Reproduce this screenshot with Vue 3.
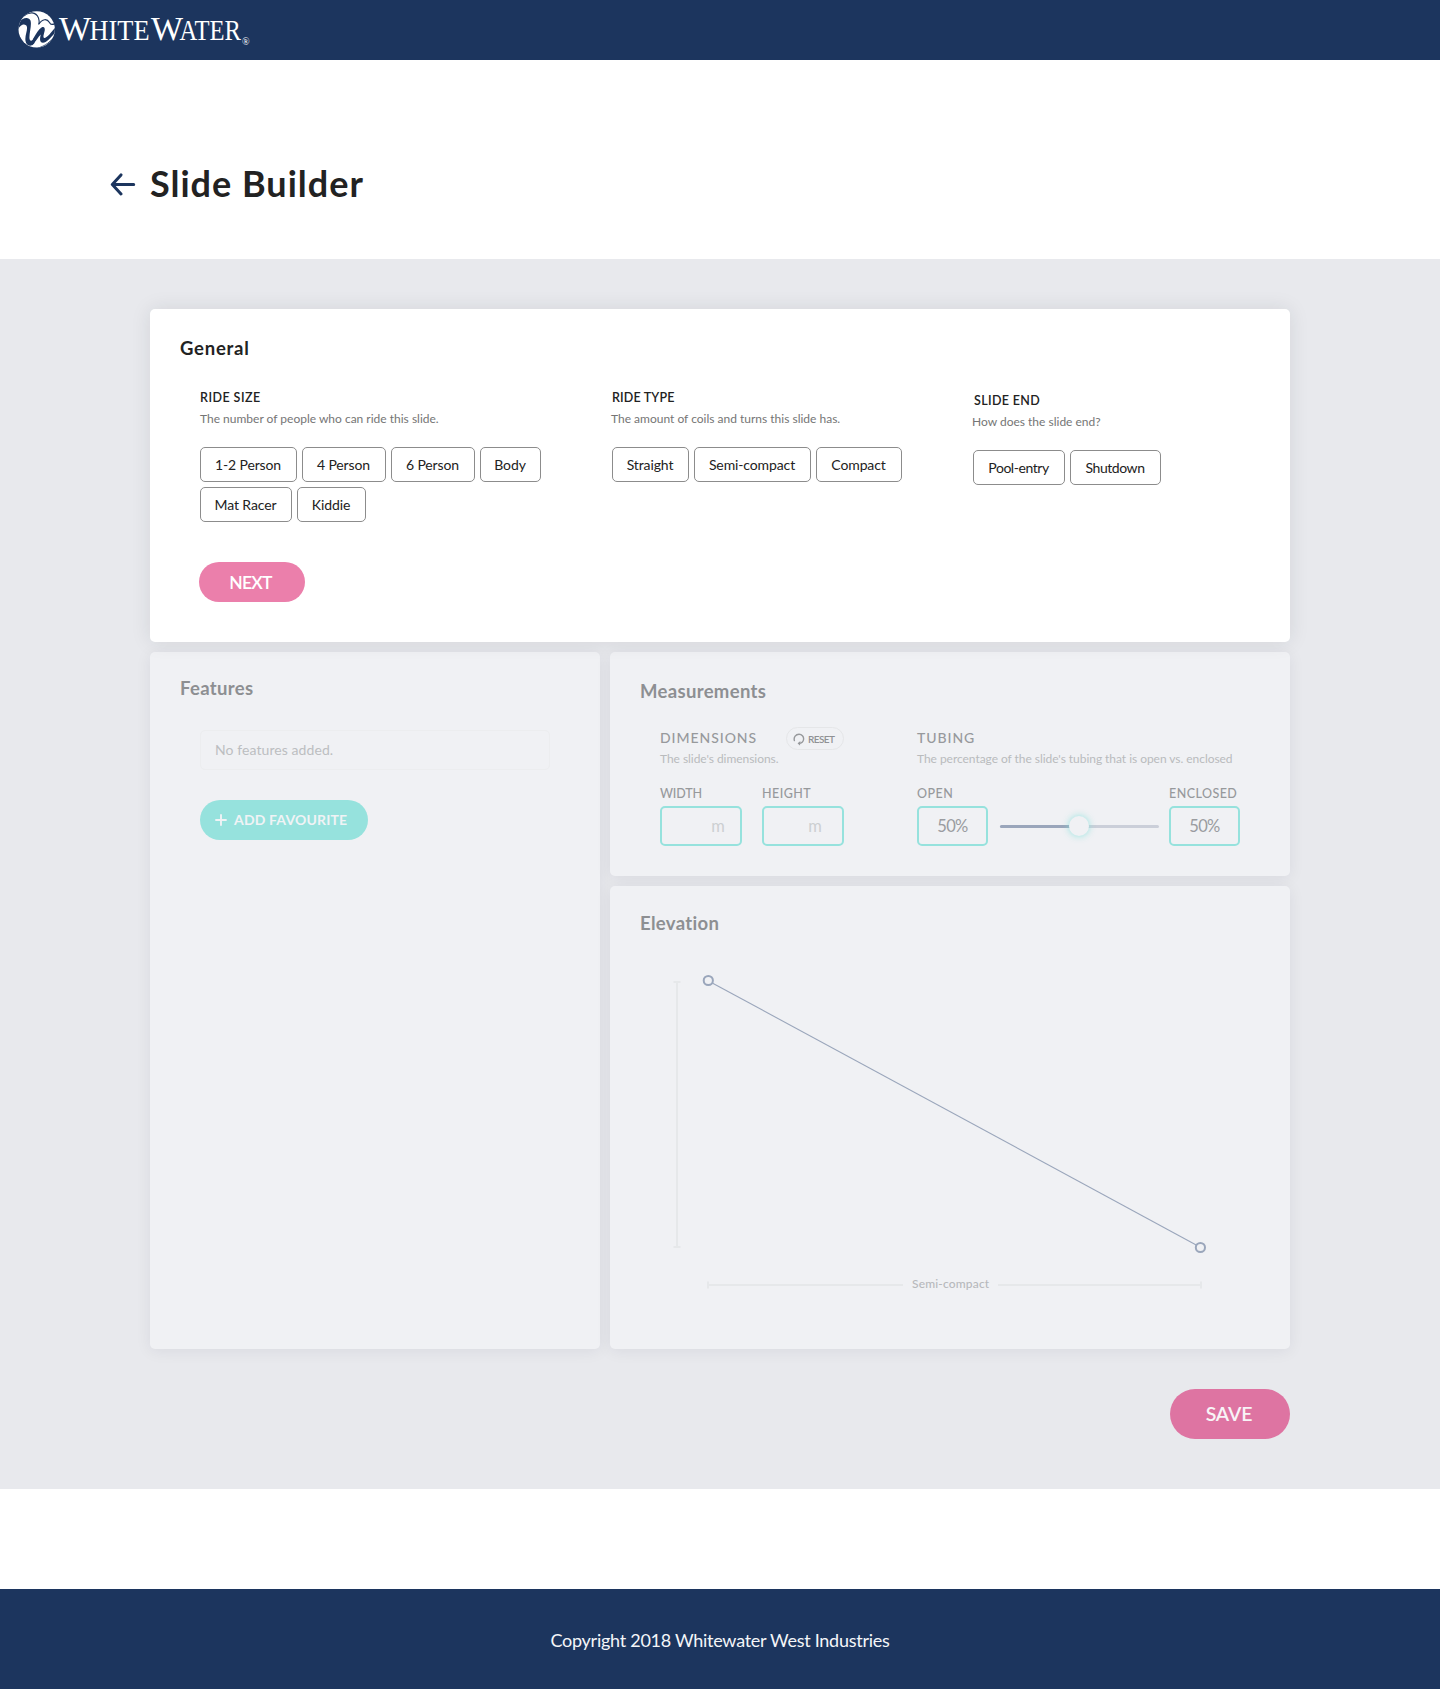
<script setup>
const rideGroups = [
  {
    id: 'size',
    label: 'RIDE SIZE',
    hint: 'The number of people who can ride this slide.',
    options: [
      { text: '1-2 Person', width: 97 },
      { text: '4 Person', width: 84 },
      { text: '6 Person', width: 84 },
      { text: 'Body', width: 61 },
      { text: 'Mat Racer', width: 92 },
      { text: 'Kiddie', width: 69 },
    ],
  },
  {
    id: 'type',
    label: 'RIDE TYPE',
    hint: 'The amount of coils and turns this slide has.',
    options: [
      { text: 'Straight', width: 77 },
      { text: 'Semi-compact', width: 117 },
      { text: 'Compact', width: 86 },
    ],
  },
  {
    id: 'end',
    label: 'SLIDE END',
    hint: 'How does the slide end?',
    options: [
      { text: 'Pool-entry', width: 92 },
      { text: 'Shutdown', width: 91 },
    ],
  },
]
const openPercent = 50
</script>

<template>
  <div class="page">
    <header class="topbar">
      <svg class="logo" width="240" height="44" viewBox="0 0 240 44" aria-label="WhiteWater">
        <defs>
          <clipPath id="disc"><circle cx="18.7" cy="21.4" r="18.2" /></clipPath>
        </defs>
        <circle cx="18.7" cy="21.4" r="18.2" fill="#fff" />
        <g clip-path="url(#disc)">
          <path d="M-1 16C4 9 11 8.500 12.500 12.500C14 17 11 25 11.500 30.500C12 34 14.500 33 16.500 29.500L16.500 35C13 39.500 8.500 38 7.500 33C6.500 27 11 20 8 17.200C5 15 1 18.500 0 22Z" fill="#1c355e" />
          <path d="M5.500 8C11 3.500 18 3.500 20.500 10C21.300 12.200 21.300 14 21 16" fill="none" stroke="#1c355e" stroke-width="1.100" />
          <path d="M20.500 16.500C24.500 10.500 29 10.500 31.500 14.500C32.700 17 34.500 17 38 15" fill="none" stroke="#1c355e" stroke-width="1.200" />
          <path d="M15 31C18.500 25.500 20.500 21.500 23.500 19.600C26.500 18 27.300 20.500 26.500 23.500C25.600 27 24.800 29.500 26.200 30C28.500 30.600 34 23.500 38 18.500L38 23.500C33 29.500 28.500 34.500 25 34.700C21.600 34.700 21.500 31 22.800 26.500C20.500 28.500 17.500 34 14 37.500Z" fill="#1c355e" />
          <path d="M20 40C27 38 33 34 38 26" fill="none" stroke="#1c355e" stroke-width="0.900" />
        </g>
        <g fill="#fff" font-family="'Liberation Serif', serif">
          <text x="41" y="32.400" font-size="33" textLength="32" lengthAdjust="spacingAndGlyphs">W</text>
          <text x="71.500" y="31.900" font-size="28.500" textLength="60" lengthAdjust="spacingAndGlyphs">HITE</text>
          <text x="133" y="32.400" font-size="33" textLength="32" lengthAdjust="spacingAndGlyphs">W</text>
          <text x="161.500" y="31.900" font-size="28.500" textLength="61.500" lengthAdjust="spacingAndGlyphs">ATER</text>
          <text x="224" y="36.500" font-size="10">®</text>
        </g>
      </svg>
    </header>

    <div class="title-row">
      <svg class="back" width="26" height="24" viewBox="0 0 26 24">
        <path d="M23.700 12.500H2.300M11 2.900L2.300 12.500L11 22" />
      </svg>
      <h1>Slide Builder</h1>
    </div>

    <main class="workspace">
      <section class="card general">
        <h2>General</h2>
        <div class="groups">
          <div v-for="g in rideGroups" :key="g.id" class="group" :class="g.id">
            <h3>{{ g.label }}</h3>
            <p class="hint">{{ g.hint }}</p>
            <div class="tags">
              <button
                v-for="o in g.options"
                :key="o.text"
                class="tag"
                :style="{ width: o.width + 'px' }"
              >{{ o.text }}</button>
            </div>
          </div>
        </div>
        <button class="pill next">NEXT</button>
      </section>

      <div class="lower">
        <section class="card muted features">
          <h2>Features</h2>
          <div class="empty">No features added.</div>
          <button class="pill add">
            <svg width="12" height="12" viewBox="0 0 12 12"><path d="M6 1V11M1 6H11" /></svg>
            <span>ADD FAVOURITE</span>
          </button>
        </section>

        <div class="right">
          <section class="card muted measurements">
            <h2>Measurements</h2>
            <div class="measures">
              <div class="dimensions">
                <div class="head">
                  <h3 class="big">DIMENSIONS</h3>
                  <button class="reset">
                    <svg width="12" height="13" viewBox="0 0 12 13">
                      <path d="M1.400 7.600C0.400 4.100 2.800 1.300 6 1.300C8.900 1.300 10.800 3.600 10.600 6.200C10.400 8.600 8.500 10.300 5.600 10.400" />
                      <path class="tip" d="M7.400 8L4.600 10.400L7 12.600Z" />
                    </svg>
                    <span>RESET</span>
                  </button>
                </div>
                <p class="hint">The slide's dimensions.</p>
                <div class="fields">
                  <div class="field">
                    <h4 class="width">WIDTH</h4>
                    <div class="input unit">m</div>
                  </div>
                  <div class="field">
                    <h4>HEIGHT</h4>
                    <div class="input unit second">m</div>
                  </div>
                </div>
              </div>
              <div class="tubing">
                <div class="head"><h3 class="big">TUBING</h3></div>
                <p class="hint">The percentage of the slide's tubing that is open vs. enclosed</p>
                <div class="balance">
                  <div class="share">
                    <h4>OPEN</h4>
                    <div class="input">{{ openPercent }}%</div>
                  </div>
                  <div class="slider">
                    <div class="filled" :style="{ width: openPercent + '%' }"></div>
                    <div class="thumb" :style="{ left: openPercent + '%' }"></div>
                  </div>
                  <div class="share">
                    <h4>ENCLOSED</h4>
                    <div class="input">{{ 100 - openPercent }}%</div>
                  </div>
                </div>
              </div>
            </div>
          </section>

          <section class="card muted elevation">
            <h2>Elevation</h2>
            <svg class="chart" width="680" height="414" viewBox="0 1 680 414">
              <g fill="none" stroke="#e6e8ea" stroke-width="2">
                <path d="M63.500 48H70.500M67 48V313M63.500 313H70.500" />
                <path d="M98 347.500V354.500M98 351H293M388 351H591M591 347.500V354.500" />
              </g>
              <g fill="none" stroke="#9aa6bb">
                <path d="M102.700 49.200L586.200 310.900" stroke-width="1.100" />
                <circle cx="98.300" cy="46.500" r="4.600" stroke-width="2" />
                <circle cx="590.400" cy="313.500" r="4.600" stroke-width="2" />
              </g>
              <text x="302" y="354.200">Semi-compact</text>
            </svg>
          </section>
        </div>
      </div>

      <div class="actions"><button class="pill save">SAVE</button></div>
    </main>

    <footer class="footer">Copyright 2018 Whitewater West Industries</footer>
  </div>
</template>

<style>
body {
  background: #fff;
}
</style>

<style scoped>
.page {
  width: 1440px;
  height: 1689px;
  display: flex;
  flex-direction: column;
  font-family: Lato, 'Open Sans', sans-serif;
  color: #222;
}
h1, h2, h3, h4, p {
  margin: 0;
}
button {
  font-family: inherit;
  padding: 0;
  border: 0;
  background: none;
  color: inherit;
  box-sizing: border-box;
}
.topbar {
  height: 60px;
  background: #1c355e;
  padding-left: 18px;
  box-sizing: border-box;
}
.logo {
  display: block;
  margin-top: 7.500px;
}
.title-row {
  height: 199px;
  display: flex;
  align-items: flex-start;
  padding: 101px 0 0 110px;
  box-sizing: border-box;
}
.back {
  margin: 11px 14px 0 0;
}
.back path {
  fill: none;
  stroke: #1c355e;
  stroke-width: 3;
  stroke-linecap: round;
  stroke-linejoin: round;
}
h1 {
  font-size: 36px;
  line-height: 44px;
  font-weight: 700;
  letter-spacing: 1px;
}
.workspace {
  height: 1230px;
  box-sizing: border-box;
  padding: 50px 150px 0;
  background: #e8e9ed;
  display: flex;
  flex-direction: column;
}
.card {
  background: #fff;
  border-radius: 5px;
  box-sizing: border-box;
  padding-left: 30px;
  box-shadow: 0 2px 16px rgba(30, 35, 50, 0.07);
}
.card.general {
  height: 333px;
  padding-top: 27px;
  box-shadow: 0 0 20px rgba(30, 35, 50, 0.1);
  position: relative;
}
h2 {
  font-size: 18.500px;
  line-height: 24px;
  font-weight: 700;
  letter-spacing: 0.330px;
}
.general h2 {
  letter-spacing: 0.750px;
}
.groups {
  display: flex;
  margin: 30px 0 40px 20px;
  height: 132px;
}
.group.size {
  width: 412px;
}
.group.type {
  width: 361px;
}
.group.end {
  padding-top: 3px;
}
h3, h4 {
  font-size: 12.500px;
  line-height: 16px;
  font-weight: 600;
  letter-spacing: 0.450px;
}
.type h3 {
  letter-spacing: 0.150px;
}
.end h3 {
  letter-spacing: 0.350px;
  padding-left: 1px;
}
.hint {
  font-size: 12px;
  line-height: 16px;
  margin-top: 5px;
  color: #757575;
  white-space: nowrap;
}
.type .hint, .end .hint {
  margin-left: -1px;
}
.tags {
  display: flex;
  flex-wrap: wrap;
  gap: 5px;
  margin-top: 20px;
  width: 350px;
}
.end .tags {
  width: 200px;
}
.tag {
  height: 35px;
  border: 1px solid #8c8c8c;
  border-radius: 5px;
  font-size: 14px;
  letter-spacing: -0.120px;
  padding-right: 1px;
  white-space: nowrap;
}
.end .tag {
  letter-spacing: -0.450px;
}
.pill {
  display: block;
  border-radius: 25px;
  font-weight: 500;
  color: #fff;
}
.next {
  width: 106px;
  height: 40px;
  margin-left: 19px;
  background: #eb7fab;
  font-size: 17.500px;
  font-weight: 600;
  letter-spacing: -0.700px;
  padding: 1px 3px 0 0;
}
.lower {
  display: flex;
  gap: 10px;
  margin-top: 10px;
  height: 697px;
}
.right {
  display: flex;
  flex-direction: column;
  gap: 10px;
}
.muted {
  background: #f0f1f4;
  color: #8d8f92;
}
.features {
  width: 450px;
  padding-top: 24px;
}
.empty {
  width: 350px;
  height: 40px;
  line-height: 38px;
  margin: 30px 0 30px 20px;
  padding-left: 14px;
  box-sizing: border-box;
  border: 1px solid #ecedef;
  border-radius: 5px;
  font-size: 14px;
  letter-spacing: 0.080px;
  color: #bcbec1;
}
.add {
  width: 168px;
  height: 40px;
  margin-left: 20px;
  padding-left: 15px;
  background: #96e2dd;
  color: #f0f3f5;
  display: flex;
  align-items: center;
  gap: 7px;
  font-size: 14px;
  font-weight: 700;
  letter-spacing: 0.170px;
}
.add span {
  padding-bottom: 2px;
}
.add path {
  fill: none;
  stroke: #f0f3f5;
  stroke-width: 1.900;
  stroke-linecap: round;
}
.measurements {
  width: 680px;
  height: 224px;
  padding-top: 27px;
}
.measures {
  display: flex;
  gap: 73px;
  margin: 24px 0 0 20px;
}
.dimensions {
  width: 184px;
}
.head {
  display: flex;
  justify-content: space-between;
  height: 23px;
}
h3.big {
  font-size: 14px;
  font-weight: 500;
  letter-spacing: 0.940px;
  padding-top: 3px;
}
.muted h3, .muted h4 {
  color: #97999c;
}
.reset {
  width: 58px;
  height: 23px;
  border: 1px solid #e5e6e8;
  border-radius: 12px;
  display: flex;
  align-items: center;
  gap: 3px;
  padding-left: 6px;
  font-size: 10px;
  font-weight: 600;
  letter-spacing: -0.600px;
  color: #8f9194;
}
.reset span {
  padding-top: 1px;
}
.reset svg {
  margin-top: 1px;
}
.reset path {
  fill: none;
  stroke: #97999c;
  stroke-width: 1.400;
  stroke-linecap: round;
}
.reset .tip {
  fill: #97999c;
  stroke: none;
}
.measures .hint {
  margin-top: 1px;
  color: #b9bbbd;
  letter-spacing: -0.045px;
}
.fields {
  display: flex;
  gap: 20px;
  margin-top: 19px;
}
.field {
  width: 82px;
}
h4 {
  font-weight: 500;
}
h4.width {
  letter-spacing: -0.150px;
}
.input {
  height: 40px;
  margin-top: 4px;
  box-sizing: border-box;
  border: 2px solid #96e2dd;
  border-radius: 5px;
  line-height: 37px;
  font-size: 16.500px;
  letter-spacing: -0.700px;
  text-align: center;
  color: #9a9ca0;
}
.input.unit {
  text-align: right;
  padding-right: 16px;
  color: #cccfd1;
}
.input.second {
  padding-right: 21px;
}
.balance {
  display: flex;
  margin-top: 19px;
}
.share {
  width: 71px;
}
.slider {
  position: relative;
  width: 159px;
  height: 3px;
  margin: 39px 10px 0 12px;
  background: #cbcfd9;
  border-radius: 2px;
}
.filled {
  height: 3px;
  background: #9aa6bb;
  border-radius: 2px;
}
.thumb {
  position: absolute;
  top: -9px;
  width: 20px;
  height: 20px;
  margin-left: -10.500px;
  border-radius: 50%;
  background: #f0f1f4;
  box-shadow: 0 0 7px rgba(130, 224, 218, 0.850);
}
.elevation {
  width: 680px;
  height: 463px;
  padding-top: 25px;
}
.chart {
  display: block;
  margin-left: -30px;
}
.chart text {
  font-family: Lato, sans-serif;
  font-size: 12px;
  font-weight: 500;
  letter-spacing: 0.160px;
  fill: #b7b9bc;
}
.actions {
  display: flex;
  justify-content: flex-end;
  margin-top: 40px;
}
.save {
  width: 120px;
  height: 50px;
  background: #de74a2;
  color: #f8f4f7;
  font-size: 19.500px;
  font-weight: 600;
  letter-spacing: -0.150px;
  padding: 0 2px 2px 0;
}
.footer {
  height: 100px;
  margin-top: 100px;
  background: #1c355e;
  color: #f4f6f9;
  box-sizing: border-box;
  padding-top: 2px;
  line-height: 98px;
  text-align: center;
  font-size: 18px;
  letter-spacing: -0.270px;
}
</style>
